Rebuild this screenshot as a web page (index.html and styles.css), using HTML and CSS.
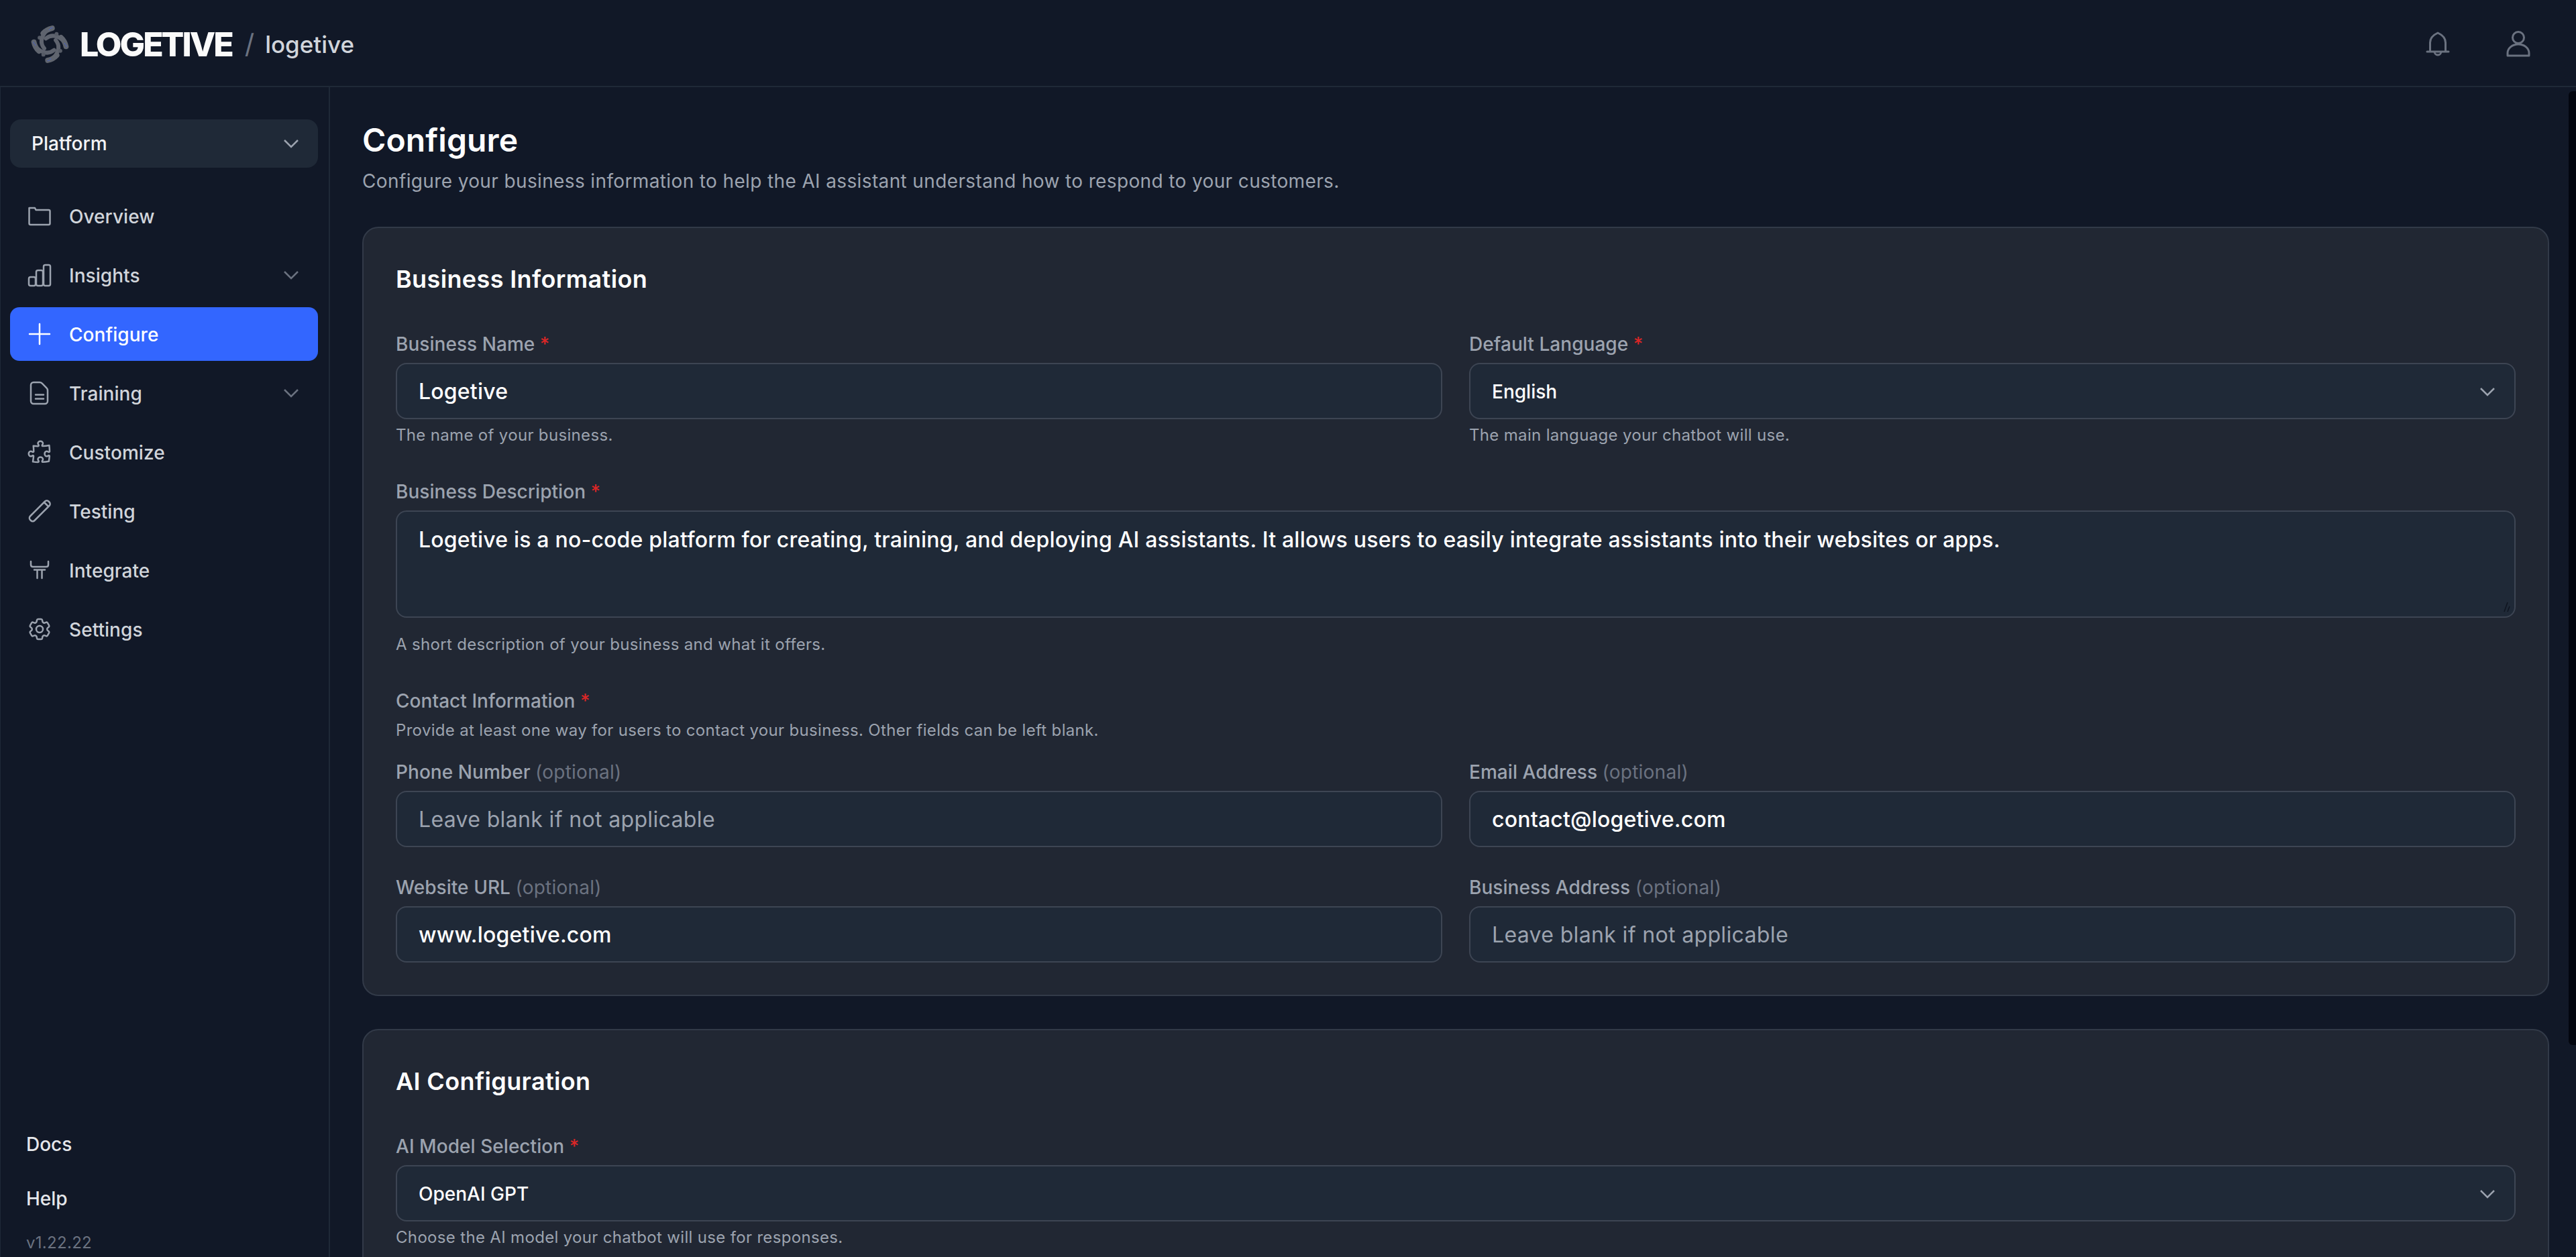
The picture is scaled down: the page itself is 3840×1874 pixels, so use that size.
FILE: index.html
```html
<!DOCTYPE html>
<html lang="en">
<head>
<meta charset="utf-8">
<title>Configure - Logetive</title>
<link rel="stylesheet" href="styles.css">
</head>
<body>
<svg class="defs" width="0" height="0" aria-hidden="true">
  <defs>
    <g id="petal">
      <path d="M143 65 Q118 70 102 88" fill="none" stroke="#60656f" stroke-width="24" stroke-linecap="round"/>
      <circle cx="86" cy="108" r="9" fill="#565b66"/>
      <path d="M114 112 Q148 84 190 118" fill="none" stroke="#5e636e" stroke-width="18" stroke-linecap="round"/>
      <circle cx="136" cy="66" r="2" fill="#3d63e8"/>
      <circle cx="142" cy="63" r="2" fill="#3d63e8"/>
      <circle cx="130" cy="71" r="2" fill="#3d63e8"/>
    </g>
  </defs>
</svg>
<header class="topbar">
  <div class="brand">
    <svg class="logo" viewBox="46 52 174 172"><use href="#petal"/><use href="#petal" transform="rotate(90 133 138)"/><use href="#petal" transform="rotate(180 133 138)"/><use href="#petal" transform="rotate(270 133 138)"/></svg>
    <span class="wordmark">LOGETIVE</span>
    <span class="slash">/</span>
    <span class="workspace">logetive</span>
  </div>
  <div class="top-actions">
    <svg class="top-icon" viewBox="0 0 40 40"><path d="M4 31h32M8.500 31V17.500C8.500 10.500 13.500 6 20 3c6.500 3 11.500 7.500 11.500 14.500V31M15 31a5 5 0 0 0 10 0"/></svg>
    <svg class="top-icon" viewBox="0 0 40 40"><circle cx="20" cy="10" r="8.500"/><path d="M4 37v-4c0-7 7-13 16-13s16 6 16 13v4z"/></svg>
  </div>
</header>
<div class="shell">
  <aside class="sidebar">
    <div class="platform"><span>Platform</span>
      <svg class="chev" viewBox="0 0 24 14"><path d="M2 2l10 10L22 2"/></svg></div>
    <nav class="nav">
      <a class="nav-item">
        <svg class="ico" viewBox="0 0 36 36"><path d="M3 6h8l1.500 3H31.500a2 2 0 0 1 2 2v18a2 2 0 0 1-2 2h-27a2 2 0 0 1-2-2V6z"/></svg>
        <span>Overview</span></a>
      <a class="nav-item">
        <svg class="ico" viewBox="0 0 36 36"><rect x="2" y="21" width="10" height="13" rx="2.500"/><rect x="13" y="11" width="10" height="23" rx="2.500"/><rect x="24" y="3" width="10" height="31" rx="2.500"/></svg>
        <span>Insights</span>
        <svg class="chev" viewBox="0 0 24 14"><path d="M2 2l10 10L22 2"/></svg></a>
      <a class="nav-item active">
        <svg class="ico" viewBox="0 0 36 36"><path d="M18 3v30M3 18h30"/></svg>
        <span>Configure</span></a>
      <a class="nav-item">
        <svg class="ico" viewBox="0 0 36 36"><path d="M9 2h9c1.500 0 2.800.6 3.800 1.600l6.600 6.800c1 1 1.600 2.400 1.600 3.800V30a4 4 0 0 1-4 4H9a4 4 0 0 1-4-4V6a4 4 0 0 1 4-4zM12 20.500h12M12 26.500h12"/></svg>
        <span>Training</span>
        <svg class="chev" viewBox="0 0 24 14"><path d="M2 2l10 10L22 2"/></svg></a>
      <a class="nav-item">
        <svg class="ico ico-40" viewBox="0 0 24 24"><path d="M14.250 6.087c0-.355.186-.676.401-.959.221-.29.349-.634.349-1.003 0-1.036-1.007-1.875-2.250-1.875s-2.250.84-2.250 1.875c0 .369.128.713.349 1.003.215.283.401.604.401.959a.64.64 0 0 1-.657.643 48.390 48.390 0 0 1-4.163-.3c.186 1.613.293 3.250.315 4.907a.656.656 0 0 1-.658.663c-.355 0-.676-.186-.959-.401a1.647 1.647 0 0 0-1.003-.349c-1.036 0-1.875 1.007-1.875 2.250s.84 2.250 1.875 2.250c.369 0 .713-.128 1.003-.349.283-.215.604-.401.959-.401.31 0 .555.26.532.57a48.039 48.039 0 0 1-.642 5.056c1.518.19 3.058.309 4.616.354a.64.64 0 0 0 .657-.643c0-.355-.186-.676-.401-.959a1.647 1.647 0 0 1-.349-1.003c0-1.035 1.008-1.875 2.250-1.875 1.243 0 2.250.84 2.250 1.875 0 .369-.128.713-.349 1.003-.215.283-.4.604-.4.959 0 .333.277.599.61.58a48.100 48.100 0 0 0 5.427-.63 48.050 48.050 0 0 0 .582-4.717.532.532 0 0 0-.533-.57c-.355 0-.676.186-.959.401-.29.221-.634.349-1.003.349-1.035 0-1.875-1.007-1.875-2.250s.84-2.250 1.875-2.250c.37 0 .713.128 1.003.349.283.215.604.401.96.401a.656.656 0 0 0 .658-.663 48.422 48.422 0 0 0-.37-5.360c-1.886.342-3.810.574-5.766.689a.578.578 0 0 1-.61-.58z"/></svg>
        <span>Customize</span></a>
      <a class="nav-item">
        <svg class="ico" viewBox="0 0 36 36"><path d="M4 25.500L26 3.500a3.900 3.900 0 0 1 5.500 0l1 1a3.900 3.900 0 0 1 0 5.500L10.500 32a3.900 3.900 0 0 1-5.500 0l-1-1a3.900 3.900 0 0 1 0-5.500zM25 5l6 6"/></svg>
        <span>Testing</span></a>
      <a class="nav-item">
        <svg class="ico" viewBox="0 0 36 36"><path d="M5 5v5c0 2 1 3 3 3h20c2 0 3-1 3-3V5M10 17.500h16M14.500 17.500V30M21.500 17.500V30"/></svg>
        <span>Integrate</span></a>
      <a class="nav-item">
        <svg class="ico ico-40" viewBox="0 0 24 24"><path d="M9.594 3.940c.09-.542.56-.94 1.110-.94h2.593c.55 0 1.020.398 1.110.94l.213 1.281c.063.374.313.686.645.87.074.04.147.083.22.127.325.196.72.257 1.075.124l1.217-.456a1.125 1.125 0 0 1 1.370.49l1.296 2.247a1.125 1.125 0 0 1-.26 1.431l-1.003.827c-.293.241-.438.613-.43.992a7.723 7.723 0 0 1 0 .255c-.008.378.137.75.43.991l1.004.827c.424.35.534.955.26 1.430l-1.298 2.247a1.125 1.125 0 0 1-1.369.491l-1.217-.456c-.355-.133-.75-.072-1.076.124a6.470 6.470 0 0 1-.22.128c-.331.183-.581.495-.644.869l-.213 1.281c-.09.543-.56.94-1.110.94h-2.594c-.55 0-1.019-.398-1.110-.94l-.213-1.281c-.062-.374-.312-.686-.644-.87a6.520 6.520 0 0 1-.22-.127c-.325-.196-.72-.257-1.076-.124l-1.217.456a1.125 1.125 0 0 1-1.369-.49l-1.297-2.247a1.125 1.125 0 0 1 .26-1.431l1.004-.827c.292-.24.437-.613.43-.991a6.932 6.932 0 0 1 0-.255c.007-.38-.138-.751-.43-.992l-1.004-.827a1.125 1.125 0 0 1-.26-1.430l1.297-2.247a1.125 1.125 0 0 1 1.370-.491l1.216.456c.356.133.751.072 1.076-.124.072-.044.146-.086.22-.128.332-.183.582-.495.644-.869l.214-1.280z"/><circle cx="12" cy="12" r="3"/></svg>
        <span>Settings</span></a>
    </nav>
    <div class="side-foot">
      <a class="foot-link">Docs</a>
      <a class="foot-link">Help</a>
      <span class="version">v1.22.22</span>
    </div>
  </aside>
  <main class="main">
    <h1 class="page-title">Configure</h1>
    <p class="page-sub">Configure your business information to help the AI assistant understand how to respond to your customers.</p>

    <section class="card">
      <h2 class="card-title">Business Information</h2>
      <div class="grid two">
        <div class="group">
          <label class="label">Business Name <span class="req">*</span></label>
          <div class="field val">Logetive</div>
          <p class="help">The name of your business.</p>
        </div>
        <div class="group">
          <label class="label">Default Language <span class="req">*</span></label>
          <div class="field select">English<svg class="chev" viewBox="0 0 24 14"><path d="M2 2l10 10L22 2"/></svg></div>
          <p class="help">The main language your chatbot will use.</p>
        </div>
      </div>
      <div class="group">
        <label class="label">Business Description <span class="req">*</span></label>
        <div class="field area val">Logetive is a no-code platform for creating, training, and deploying AI assistants. It allows users to easily integrate assistants into their websites or apps.
          <svg class="grip" viewBox="0 0 14 16"><path d="M5 15L10 1M10 15L13 7"/></svg>
        </div>
        <p class="help help-area">A short description of your business and what it offers.</p>
      </div>
      <div class="group">
        <label class="label">Contact Information <span class="req">*</span></label>
        <p class="help">Provide at least one way for users to contact your business. Other fields can be left blank.</p>
        <div class="grid contact">
          <div class="sub">
            <label class="label">Phone Number <span class="opt">(optional)</span></label>
            <div class="field ph">Leave blank if not applicable</div>
          </div>
          <div class="sub">
            <label class="label">Email Address <span class="opt">(optional)</span></label>
            <div class="field val">contact@logetive.com</div>
          </div>
          <div class="sub">
            <label class="label">Website URL <span class="opt">(optional)</span></label>
            <div class="field val">www.logetive.com</div>
          </div>
          <div class="sub">
            <label class="label">Business Address <span class="opt">(optional)</span></label>
            <div class="field ph">Leave blank if not applicable</div>
          </div>
        </div>
      </div>
    </section>

    <section class="card">
      <h2 class="card-title">AI Configuration</h2>
      <div class="group">
        <label class="label">AI Model Selection <span class="req">*</span></label>
        <div class="field select">OpenAI GPT<svg class="chev" viewBox="0 0 24 14"><path d="M2 2l10 10L22 2"/></svg></div>
        <p class="help">Choose the AI model your chatbot will use for responses.</p>
      </div>
    </section>
  </main>
</div>
<div class="scroll-thumb"></div>
</body>
</html>
```
FILE: styles.css
```css
* { box-sizing: border-box; }
html, body { margin: 0; height: 100%; overflow: hidden; }
body {
  background: #111827;
  color: #f9fafb;
  font-family: Inter, "Liberation Sans", sans-serif;
  font-size: 28px;
  line-height: 40px;
  position: relative;
}
.defs { position: absolute; }

.topbar {
  height: 130px;
  border-bottom: 2px solid #1f2937;
  display: flex;
  align-items: center;
  justify-content: space-between;
  padding: 3px 66px 0 46px;
}
.brand { display: flex; align-items: center; }
.logo { width: 57px; height: 58px; flex: none; }
.wordmark {
  margin-left: 16px;
  font-size: 50px;
  line-height: 60px;
  font-weight: 800;
  letter-spacing: -3px;
  color: #fafafa;
}
.slash { margin-left: 19px; font-size: 40px; color: #6b7280; font-weight: 400; }
.workspace { margin-left: 16px; font-size: 35px; font-weight: 500; color: #d1d5db; }
.top-actions { display: flex; gap: 80px; align-items: center; }
.top-icon { width: 40px; height: 40px; fill: none; stroke: #6b7280; stroke-width: 3; stroke-linejoin: round; stroke-linecap: round; }

.shell { display: flex; height: calc(100% - 130px); }
.sidebar {
  width: 492px;
  flex: none;
  border-right: 2px solid #1f2937;
  border-left: 1px solid #1f2937;
  padding: 48px 16px 0 14px;
  display: flex;
  flex-direction: column;
}
.platform {
  height: 72px;
  border-radius: 16px;
  background: #1f2937;
  display: flex;
  align-items: center;
  justify-content: space-between;
  padding: 0 28px 0 32px;
  font-weight: 500;
  color: #f3f4f6;
}
.chev { width: 24px; height: 14px; fill: none; stroke: #9ca3af; stroke-width: 2.500; flex: none; }
.nav { margin-top: 32px; display: flex; flex-direction: column; gap: 8px; }
.nav-item {
  height: 80px;
  border-radius: 14px;
  display: flex;
  align-items: center;
  padding: 0 28px 0 26px;
  color: #d1d5db;
  font-weight: 500;
  letter-spacing: .05px;
}
.nav-item span { margin-left: 26px; flex: 1; padding-top: 2px; }
.nav-item.active { background: #3366ff; color: #fff; }
.nav-item .chev { stroke: #6b7280; }
.ico { width: 36px; height: 36px; flex: none; fill: none; stroke: #9ca3af; stroke-width: 2.500; stroke-linecap: round; stroke-linejoin: round; }
.ico-40 { width: 40px; height: 40px; margin: 0 -2px; stroke-width: 1.500; }
.active .ico { stroke: #fff; }
.side-foot {
  margin-top: auto;
  padding: 0 0 5px 24px;
  display: flex;
  flex-direction: column;
}
.foot-link { height: 81px; display: flex; align-items: center; font-weight: 500; color: #e5e7eb; }
.version { font-size: 24px; line-height: 32px; color: #6b7280; margin: 10px 0 0; letter-spacing: .3px; }

.main { flex: 1; min-width: 0; padding: 48px 40px 0 48px; overflow: hidden; }
.page-title { margin: 0; font-size: 48px; line-height: 62px; height: 64px; font-weight: 600; color: #fff; letter-spacing: .1px; }
.page-sub { margin: 8px 0 48px; color: #9ca3af; letter-spacing: .37px; height: 40px; }

.card {
  background: #212733;
  border: 2px solid #323a48;
  border-radius: 24px;
  padding: 48px;
  margin-bottom: 49px;
  display: flex;
  flex-direction: column;
  gap: 48px;
}
.card-title { margin: 0 0 1px; font-size: 36px; line-height: 56px; font-weight: 600; color: #fff; letter-spacing: .37px; }
.grid { display: grid; grid-template-columns: 1fr 1fr; column-gap: 40px; }
.contact { row-gap: 40px; margin-top: 26px; }
.group, .sub { display: flex; flex-direction: column; min-width: 0; }
.label { font-size: 28px; line-height: 40px; font-weight: 500; color: #9ca3af; letter-spacing: .05px; }
.req { color: #dc2626; }
.opt { color: #6b7280; font-weight: 400; letter-spacing: .25px; }
.field {
  margin-top: 8px;
  height: 84px;
  border: 2px solid #3d4553;
  border-radius: 16px;
  background: #1f2937;
  padding: 2px 32px 0;
  display: flex;
  align-items: center;
  font-size: 32px;
  line-height: 48px;
}
.val { color: #fff; font-weight: 500; letter-spacing: .2px; }
.ph { color: #9ca3af; font-weight: 400; letter-spacing: .35px; }
.select { font-size: 28px; font-weight: 500; color: #fff; justify-content: space-between; padding-right: 28px; letter-spacing: 0; }
.area { height: 160px; align-items: flex-start; padding-top: 18px; position: relative; }
.grip { position: absolute; right: 6px; bottom: 6px; width: 14px; height: 16px; fill: none; stroke: #0f1520; stroke-width: 1.500; }
.help { margin: 8px 0 0; font-size: 24px; line-height: 32px; color: #9ca3af; letter-spacing: .33px; }
.help-area { margin-top: 24px; }

.scroll-thumb {
  position: absolute;
  top: 136px;
  right: 0;
  width: 11px;
  height: 1422px;
  background: #03060f;
  border-radius: 6px 0 0 6px;
}
```
